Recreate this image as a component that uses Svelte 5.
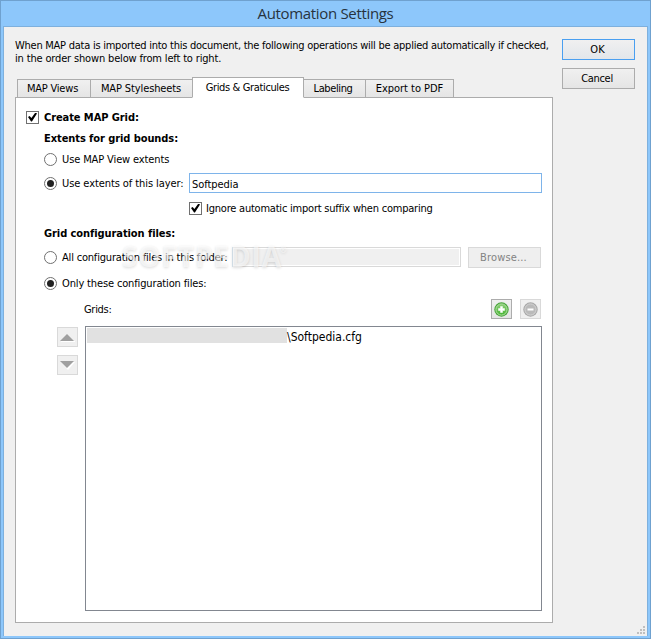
<script>
    const tabs = [
        { label: 'MAP Views', width: 74, spacing: -0.2, shift: 3 },
        { label: 'MAP Stylesheets', width: 103, spacing: -0.12, shift: 1 },
        { label: 'Grids & Graticules', width: 112, spacing: -0.36, shift: 1 },
        { label: 'Labeling', width: 63, spacing: -0.38, shift: 3 },
        { label: 'Export to PDF', width: 89, spacing: -0.04, shift: 0 }
    ];

    let active = $state(2);
    let createGrid = $state(true);
    let ignoreSuffix = $state(true);
    let extents = $state('layer');
    let config = $state('files');
    let layer = $state('Softpedia');
    let folder = $state('');
</script>

<div class="window">
    <div class="title"><span>Automation Settings</span></div>
    <div class="client">
        <div class="main">
            <p class="intro">
                <span class="line1">When MAP data is imported into this document, the following operations will be applied automatically if checked,</span><br />
                <span class="line2">in the order shown below from left to right.</span>
            </p>

            <div class="tabs">
                {#each tabs as tab, i}
                    <button
                        class="tab"
                        class:active={active === i}
                        style:width="{tab.width}px"
                        style:padding-right="{tab.shift}px"
                        style:letter-spacing="{tab.spacing}px"
                        onclick={() => (active = i)}
                    >{tab.label}</button>
                {/each}
            </div>

            <div class="panel">
                <label class="row create">
                    <input type="checkbox" bind:checked={createGrid} />
                    <b>Create MAP Grid:</b>
                </label>
                <div class="row heading"><b>Extents for grid bounds:</b></div>
                <label class="row view">
                    <input type="radio" value="view" bind:group={extents} />
                    <span>Use MAP View extents</span>
                </label>
                <div class="row layer">
                    <label>
                        <input type="radio" value="layer" bind:group={extents} />
                        <span>Use extents of this layer:</span>
                    </label>
                    <input class="text" type="text" spellcheck="false" bind:value={layer} />
                </div>
                <label class="row ignore">
                    <input type="checkbox" bind:checked={ignoreSuffix} />
                    <span>Ignore automatic import suffix when comparing</span>
                </label>

                <div class="row heading config"><b>Grid configuration files:</b></div>
                <div class="row folder">
                    <label>
                        <input type="radio" value="folder" bind:group={config} />
                        <span>All configuration files in this folder:</span>
                    </label>
                    <input class="text" type="text" bind:value={folder} disabled={config !== 'folder'} />
                    <button class="push browse" disabled={config !== 'folder'}>Browse...</button>
                    <div class="watermark">SOFTPEDIA<sup>®</sup></div>
                </div>
                <label class="row files">
                    <input type="radio" value="files" bind:group={config} />
                    <span>Only these configuration files:</span>
                </label>

                <div class="grids">
                    <span>Grids:</span>
                    <button class="tool add" aria-label="Add">
                        <svg width="15" height="15" viewBox="0 0 15 15">
                            <defs>
                                <linearGradient id="green" x1="0" y1="0" x2="0" y2="1">
                                    <stop offset="0" stop-color="#8fcf7a" />
                                    <stop offset="1" stop-color="#45b532" />
                                </linearGradient>
                            </defs>
                            <circle cx="7.5" cy="7.5" r="7.2" fill="#4aa53c" />
                            <circle cx="7.5" cy="7.5" r="5.6" fill="url(#green)" stroke="#b4e2a5" />
                            <path d="M6.5 4.5h2v2h2v2h-2v2h-2v-2h-2v-2h2z" fill="#fff" stroke="#fff" stroke-width=".5" />
                        </svg>
                    </button>
                    <button class="tool" aria-label="Remove" disabled>
                        <svg width="15" height="15" viewBox="0 0 15 15">
                            <circle cx="7.5" cy="7.5" r="7.2" fill="#a8a8a8" />
                            <circle cx="7.5" cy="7.5" r="5.6" fill="#bababa" stroke="#d6d6d6" />
                            <path d="M4.5 6.5h6v2h-6z" fill="#fff" />
                        </svg>
                    </button>
                </div>

                <div class="body">
                    <div class="arrows">
                        <button class="tool" aria-label="Move up" disabled>
                            <svg width="15" height="9" viewBox="0 0 15 9">
                                <path d="M1 8.5h14" stroke="#fff" />
                                <path d="M0 8L7 1L14 8z" fill="#a0a0a0" />
                            </svg>
                        </button>
                        <button class="tool" aria-label="Move down" disabled>
                            <svg width="15" height="9" viewBox="0 0 15 9">
                                <path d="M1 1h14L8 9z" fill="#fff" />
                                <path d="M0 0h14L7 7z" fill="#a0a0a0" />
                            </svg>
                        </button>
                    </div>
                    <div class="list">
                        <div class="item"><i></i><span>\Softpedia.cfg</span></div>
                    </div>
                </div>
            </div>
        </div>

        <div class="side">
            <button class="push default">OK</button>
            <button class="push cancel">Cancel</button>
            <svg class="grip" width="8" height="8" viewBox="0 0 8 8">
                <path d="M6 0h2v2h-2zM3 3h2v2h-2zM6 3h2v2h-2zM0 6h2v2h-2zM3 6h2v2h-2zM6 6h2v2h-2z" fill="#bfbfbf" />
            </svg>
        </div>
    </div>
</div>

<style>
    :global(body) {
        overflow: hidden;
    }

    * {
        box-sizing: border-box;
    }

    .window {
        width: 651px;
        height: 639px;
        border: 1px solid #6fa1cf;
        background: #8dc7fb;
        padding: 0 2px 2px;
        display: flex;
        flex-direction: column;
        font: 11px/13px 'DejaVu Sans Condensed', 'DejaVu Sans', sans-serif;
        font-stretch: condensed;
        color: #000;
    }

    button, input {
        font: inherit;
        letter-spacing: inherit;
        margin: 0;
    }

    span, b {
        white-space: nowrap;
    }

    b {
        letter-spacing: -0.08px;
    }

    .title {
        height: 25px;
        flex: none;
        text-align: center;
        font: 15px/25px 'Open Sans', sans-serif;
        letter-spacing: -0.33px;
        color: #27333e;
    }

    .client {
        flex: 1;
        border: 1px solid #7eb0dd;
        border-bottom: 0;
        background: #f0f0f0;
        display: flex;
    }

    .main {
        width: 549px;
        padding: 12px 0 0 11px;
    }

    .intro {
        margin: 0;
        height: 38px;
    }

    .line1 {
        letter-spacing: -0.25px;
    }

    .line2 {
        letter-spacing: -0.16px;
    }

    .tabs {
        display: flex;
        align-items: flex-end;
        height: 21px;
        padding-left: 2px;
        margin-bottom: -1px;
    }

    .tab {
        height: 19px;
        padding: 0;
        margin-right: -1px;
        border: 1px solid #acacac;
        background: linear-gradient(#f0f0f0, #e5e5e5);
        color: #000;
        white-space: nowrap;
    }

    .tab:first-child {
        padding-right: 4px;
    }

    .tab.active {
        height: 21px;
        padding-bottom: 1px;
        border-bottom-color: #fff;
        background: #fff;
        z-index: 1;
    }

    .panel {
        width: 538px;
        height: 526px;
        border: 1px solid #acacac;
        background: #fff;
        padding: 8px 10px 11px;
    }

    .row, .row label {
        display: flex;
        align-items: center;
    }

    .row {
        padding-left: 18px;
    }

    input[type='checkbox'], input[type='radio'] {
        appearance: none;
        flex: none;
        width: 13px;
        height: 13px;
        border: 1px solid #707070;
        background: #fff;
        margin-right: 5px;
        display: grid;
        place-items: center;
    }

    input[type='checkbox'] {
        margin-right: 4px;
    }

    input[type='radio'] {
        border-radius: 50%;
    }

    input[type='radio']:checked::before {
        content: '';
        width: 7px;
        height: 7px;
        border-radius: 50%;
        background: #212121;
    }

    input[type='checkbox']:checked::before {
        content: '';
        width: 9px;
        height: 9px;
        background: #000;
        clip-path: polygon(0 50%, 18% 38%, 38% 62%, 82% 0, 100% 12%, 44% 100%, 34% 100%);
    }

    .create {
        height: 22px;
        padding-left: 0;
    }

    .create input[type='checkbox'] {
        margin-right: 5px;
    }

    .heading {
        height: 20px;
    }

    .view {
        height: 22px;
        letter-spacing: -0.12px;
    }

    .layer {
        height: 26px;
    }

    .layer label {
        width: 145px;
        letter-spacing: -0.08px;
    }

    .text {
        height: 20px;
        min-width: 0;
        border: 1px solid #7eb4ea;
        background: #fff;
        padding: 2px 2px 0;
        outline: none;
    }

    .layer .text {
        width: 353px;
        letter-spacing: -0.05px;
    }

    .ignore {
        height: 24px;
        padding-left: 163px;
        letter-spacing: -0.22px;
    }

    .config {
        height: 27px;
    }

    .folder {
        position: relative;
        height: 21px;
    }

    .folder label {
        width: 188px;
        flex: none;
        letter-spacing: -0.19px;
    }

    .folder .text {
        width: 229px;
        flex: none;
        align-self: flex-start;
    }

    .text:disabled {
        border-color: #d9d9d9;
        background: #f0f0f0;
        box-shadow: inset 0 0 0 1px #fff;
    }

    .watermark {
        position: absolute;
        left: 96px;
        top: -6px;
        font: bold 28px/30px 'Open Sans', sans-serif;
        letter-spacing: 0.9px;
        color: rgba(255, 255, 255, 0.6);
        text-shadow: 0 1px 3px rgba(0, 0, 0, 0.14);
        pointer-events: none;
        white-space: nowrap;
    }

    .watermark sup {
        font-size: 8px;
        line-height: 0;
        vertical-align: 14px;
        margin-left: -2px;
    }

    .files {
        height: 31px;
        letter-spacing: -0.14px;
    }

    .push {
        width: 73px;
        height: 21px;
        flex: none;
        padding: 0;
        border: 1px solid #acacac;
        background: linear-gradient(#f0f0f0, #e5e5e5);
        color: #000;
    }

    .push.default {
        border-color: #4a9ff0;
        background: linear-gradient(#f0f0f0, #e2e6eb);
        padding-right: 2px;
    }

    .push.cancel {
        letter-spacing: -0.3px;
        padding-right: 3px;
    }

    .push:disabled {
        border-color: #d9d9d9;
        background: #efefef;
        color: #838383;
    }

    .push.browse {
        margin-left: 7px;
        padding-right: 2px;
        letter-spacing: 0.15px;
    }

    .grids {
        display: flex;
        align-items: center;
        height: 20px;
        padding: 0 1px 0 58px;
    }

    .grids span {
        flex: 1;
        letter-spacing: -0.3px;
    }

    .tool {
        width: 21px;
        height: 20px;
        padding: 0;
        border: 1px solid #acacac;
        background: linear-gradient(#f0f0f0, #e5e5e5);
        display: flex;
        align-items: center;
        justify-content: center;
    }

    .tool:disabled {
        border-color: #d9d9d9;
        background: #f0f0f0;
    }

    .add {
        margin-right: 8px;
    }

    .body {
        display: flex;
        margin-top: 7px;
        padding-left: 31px;
    }

    .arrows {
        width: 28px;
        padding-top: 1px;
        display: flex;
        flex-direction: column;
        gap: 8px;
    }

    .list {
        width: 457px;
        height: 285px;
        border: 1px solid #828790;
        padding: 1px;
    }

    .item {
        display: flex;
        align-items: flex-start;
        height: 16px;
    }

    .item i {
        width: 200px;
        height: 15px;
        background: #e1e1e1;
    }

    .item span {
        font-size: 12px;
        line-height: 18px;
    }

    .side {
        flex: 1;
        padding: 12px 2px 2px 9px;
        display: flex;
        flex-direction: column;
        gap: 8px;
    }

    .grip {
        margin: auto 0 0 auto;
    }
</style>
